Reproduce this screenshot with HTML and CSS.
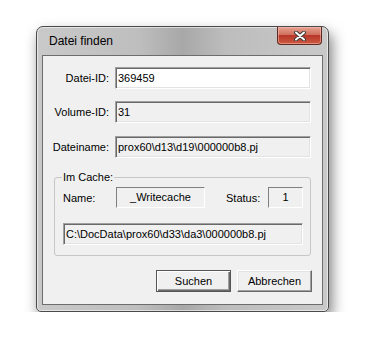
FILE: index.html
```html
<!DOCTYPE html>
<html lang="de">
<head>
    <meta charset="UTF-8">
    <title>Datei finden</title>
    <link rel="stylesheet" href="styles.css">
</head>
<body>
    <div class="window">
        <div class="titlebar">
            <span class="title">Datei finden</span>
            <div class="close-btn">
                <svg width="12" height="10" viewBox="0 0 12 10">
                    <path d="M2 1.5 L10 8.5 M10 1.5 L2 8.5" stroke="#3b3b3b" stroke-width="4" stroke-linecap="round"/>
                    <path d="M2 1.5 L10 8.5 M10 1.5 L2 8.5" stroke="#fff" stroke-width="2" stroke-linecap="round"/>
                </svg>
            </div>
        </div>
        <div class="client">
            <div class="fields">
                <label class="lbl">Datei-ID:</label>
                <div class="edit white">369459</div>
                <label class="lbl">Volume-ID:</label>
                <div class="edit">31</div>
                <label class="lbl">Dateiname:</label>
                <div class="edit">prox60\d13\d19\000000b8.pj</div>
            </div>
            <fieldset class="group">
                <legend>Im Cache:</legend>
                <div class="cache-row">
                    <span class="name-lbl">Name:</span>
                    <div class="edit small name-box">_Writecache</div>
                    <span class="status-lbl">Status:</span>
                    <div class="edit small status-box">1</div>
                </div>
                <div class="edit path">C:\DocData\prox60\d33\da3\000000b8.pj</div>
            </fieldset>
            <div class="buttons">
                <button class="btn default">Suchen</button>
                <button class="btn">Abbrechen</button>
            </div>
        </div>
    </div>
</body>
</html>
```

FILE: styles.css
```css
body {
    margin: 0;
    background: #fff;
    font-family: "Liberation Sans", Arial, sans-serif;
    font-size: 11px;
    color: #000;
}

.window {
    box-sizing: border-box;
    width: 293px;
    height: 286px;
    margin: 26px 0 0 36px;
    padding: 0 5px 6px;
    border: 1px solid #4a4a4a;
    border-radius: 7px 7px 5px 5px;
    background: linear-gradient(to right, #c9c9c9, #bebebe 35%, #a8a8a8 50%, #bdbdbd 65%, #c9c9c9);
    box-shadow: inset 0 0 0 1px rgba(255, 255, 255, 0.55), 3px 7px 14px rgba(0, 0, 0, 0.5);
}

.titlebar {
    display: flex;
    height: 28px;
    padding-left: 7px;
}
.title {
    font-size: 12px;
    line-height: 28px;
}
.close-btn {
    box-sizing: border-box;
    width: 45px;
    height: 18px;
    margin-left: auto;
    margin-right: 1px;
    display: flex;
    align-items: center;
    justify-content: center;
    border: 1px solid #5e2a22;
    border-top: none;
    border-radius: 0 0 4px 4px;
    background: linear-gradient(#e6a291, #d0705e 45%, #b8372a 50%, #cc5a3f);
    box-shadow: inset 0 0 0 1px rgba(255, 200, 190, 0.5);
}

.client {
    box-sizing: border-box;
    height: 250px;
    border: 1px solid #6d6d6d;
    background: #f0f0f0;
}

.fields {
    display: grid;
    grid-template-columns: 66px 196px;
    grid-template-rows: 22px 22px 23px;
    column-gap: 6px;
    row-gap: 12px;
    padding-top: 11px;
}
.lbl {
    text-align: right;
    line-height: 22px;
    align-self: end;
}
.fields .edit {
    align-self: end;
}

.edit {
    box-sizing: border-box;
    height: 22px;
    padding: 3px 0 0 2px;
    line-height: 14px;
    white-space: nowrap;
    border: 1px solid;
    border-color: #a0a0a0 #fff #fff #a0a0a0;
    box-shadow: inset 1px 1px 0 #696969, inset -1px -1px 0 #e3e3e3;
    background: #f0f0f0;
}
.white {
    background: #fff;
}
.small {
    height: 21px;
    border-color: #808080 #fff #fff #808080;
    box-shadow: none;
    text-align: center;
    padding: 2px 0 0;
}

.group {
    width: 257px;
    box-sizing: border-box;
    margin: 13px 0 0 11px;
    padding: 3px 7px 10px 8px;
    border: 1px solid #c6c6c6;
    border-radius: 3px;
}
.group legend {
    padding: 0 1px;
    margin-left: -1px;
    line-height: 13px;
}
.cache-row {
    display: flex;
    align-items: center;
    height: 21px;
    margin-bottom: 15px;
}
.name-lbl {
    width: 53px;
}
.name-box {
    width: 89px;
}
.status-lbl {
    width: 42px;
    margin-left: 21px;
}
.status-box {
    width: 35px;
}
.path {
    width: 240px;
}

.buttons {
    display: flex;
    justify-content: flex-end;
    gap: 6px;
    margin-top: 14px;
    padding-right: 10px;
}
.btn {
    box-sizing: border-box;
    width: 75px;
    height: 22px;
    padding: 0;
    font-family: inherit;
    font-size: 11px;
    color: #000;
    background: #f0f0f0;
    border: 1px solid;
    border-color: #fff #696969 #696969 #fff;
    box-shadow: inset -1px -1px 0 #a0a0a0, inset 1px 1px 0 #e3e3e3;
}
.btn.default {
    border: 1px solid #555;
    box-shadow: inset 1px 1px 0 #fff, inset -1px -1px 0 #696969, inset -2px -2px 0 #a0a0a0;
}
```
